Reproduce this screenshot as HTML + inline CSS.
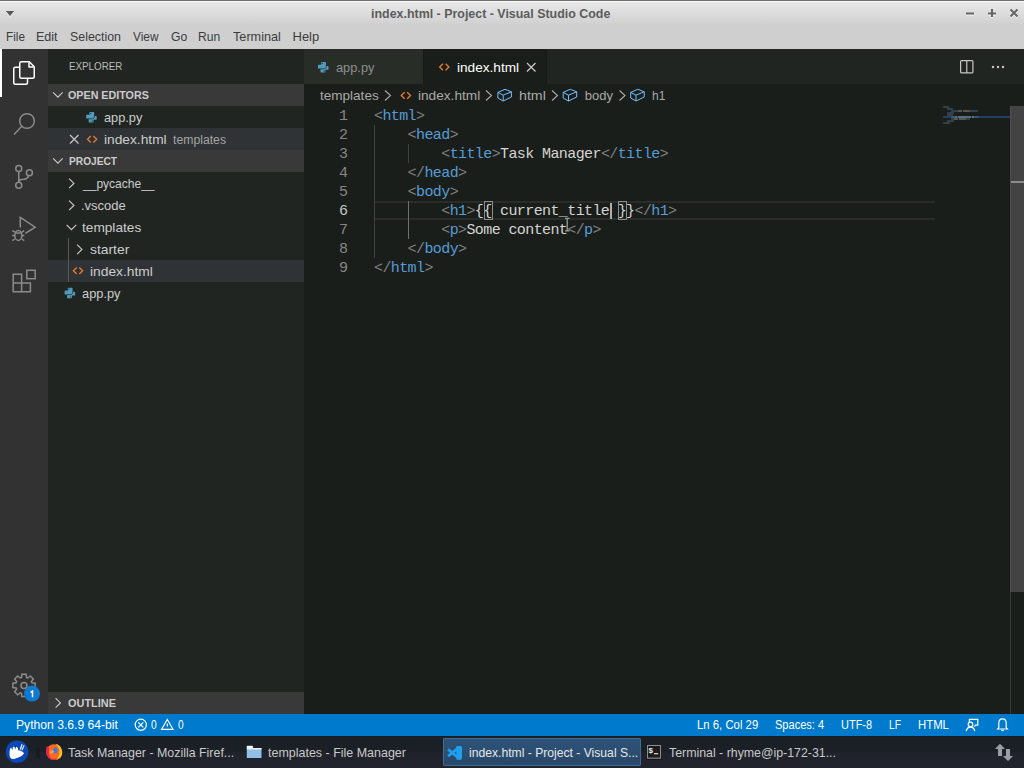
<!DOCTYPE html>
<html><head><meta charset="utf-8">
<style>
*{margin:0;padding:0;box-sizing:border-box}
html,body{width:1024px;height:768px;overflow:hidden;background:#1a1e1a;font-family:"Liberation Sans",sans-serif}
.a{position:absolute}
.t{position:absolute;white-space:pre;line-height:1;transform-origin:0 0}
#title{left:0;top:0;width:1024px;height:24px;background:linear-gradient(#e7e7e7 0px,#e3e3e3 6px,#d2d2d2 22px,#cfcfcf 24px);border-top:1px solid #6e6e6e}
#title:after{content:"";position:absolute;left:0;top:0;width:1024px;height:1px;background:#fafafa}
#menu{left:0;top:24px;width:1024px;height:25px;background:#cfcfcf}
#act{left:0;top:49px;width:48px;height:665px;background:#323232}
#side{left:48px;top:49px;width:256px;height:665px;background:#212522}
#tabs{left:304px;top:49px;width:720px;height:35px;background:#212522}
#status{left:0;top:714px;width:1024px;height:22px;background:#007acc}
#task{left:0;top:736px;width:1024px;height:32px;background:linear-gradient(#1b2026 0px,#1b2027 15px,#20232c 16px,#21232d 32px);border-top:1px solid #181b1f}
.menu{font-size:13px;color:#3c3c3c;top:30px}
.st{font-size:12px;color:#ffffff;top:719px}
.code{font-family:"Liberation Mono",monospace;font-size:15px;letter-spacing:-0.6px;line-height:19px;position:absolute;white-space:pre;left:374px}
.ln{font-family:"Liberation Mono",monospace;font-size:15px;line-height:19px;position:absolute;white-space:pre;color:#858585;text-align:right;width:40px;left:308px}
.p{color:#808080}.k{color:#569cd6}.x{color:#d4d4d4}
.side{font-size:13px;color:#cccccc}
.hdr{font-size:11px;font-weight:bold;color:#cccccc}
</style></head><body>
<!-- title bar -->
<div id="title" class="a"></div>
<!-- menu -->
<div id="menu" class="a"></div>

<!-- activity bar -->
<div id="act" class="a"></div>
<div class="a" style="left:0;top:49px;width:2px;height:48px;background:#ffffff"></div>

<!-- sidebar -->
<div id="side" class="a"></div>
<div class="a" style="left:48px;top:84px;width:256px;height:22px;background:#393939"></div>
<div class="a" style="left:48px;top:128px;width:256px;height:22px;background:#2f3335"></div>
<div class="a" style="left:48px;top:150px;width:256px;height:22px;background:#393939"></div>
<div class="a" style="left:48px;top:260px;width:256px;height:22px;background:#2f3335"></div>
<div class="a" style="left:48px;top:692px;width:256px;height:22px;background:#393939"></div>

<!-- tabs -->
<div id="tabs" class="a"></div>
<div class="a" style="left:304px;top:49px;width:119px;height:35px;background:#292d28"></div>
<div class="a" style="left:423px;top:49px;width:124px;height:35px;background:#1a1e1a;border-left:1px solid #161916;border-right:1px solid #161916"></div>

<!-- breadcrumbs -->

<!-- code -->
<div class="ln" style="top:107px">1
2
3
4
5
<span style="color:#c6c6c6">6</span>
7
8
9</div>
<div class="code" style="top:107px"><span class="p">&lt;</span><span class="k">html</span><span class="p">&gt;</span>
    <span class="p">&lt;</span><span class="k">head</span><span class="p">&gt;</span>
        <span class="p">&lt;</span><span class="k">title</span><span class="p">&gt;</span><span class="x">Task Manager</span><span class="p">&lt;/</span><span class="k">title</span><span class="p">&gt;</span>
    <span class="p">&lt;/</span><span class="k">head</span><span class="p">&gt;</span>
    <span class="p">&lt;</span><span class="k">body</span><span class="p">&gt;</span>
        <span class="p">&lt;</span><span class="k">h1</span><span class="p">&gt;</span><span class="x">{{ current_title }}</span><span class="p">&lt;/</span><span class="k">h1</span><span class="p">&gt;</span>
        <span class="p">&lt;</span><span class="k">p</span><span class="p">&gt;</span><span class="x">Some content</span><span class="p">&lt;/</span><span class="k">p</span><span class="p">&gt;</span>
    <span class="p">&lt;/</span><span class="k">body</span><span class="p">&gt;</span>
<span class="p">&lt;/</span><span class="k">html</span><span class="p">&gt;</span></div>


<!-- editor decorations -->
<div class="a" style="left:374px;top:201px;width:561px;height:19px;border-top:2px solid #2a2c2a;border-bottom:2px solid #2a2c2a"></div>
<div class="a" style="left:374px;top:125px;width:1px;height:133px;background:#404040"></div>
<div class="a" style="left:408px;top:144px;width:1px;height:19px;background:#404040"></div>
<div class="a" style="left:408px;top:201px;width:1px;height:38px;background:#707070"></div>
<div class="a" style="left:484px;top:201px;width:9px;height:19px;border:1px solid #8c8c8c"></div>
<div class="a" style="left:618px;top:201px;width:9px;height:19px;border:1px solid #8c8c8c"></div>
<div class="a" style="left:610px;top:203px;width:2px;height:16px;background:#aeafad"></div>
<svg class="a" style="left:560px;top:214px" width="14" height="20"><path d="M5 4.3 H9.6 M7.2 4.3 V16.8 M5 16.8 H9.6" stroke="#9a9a9a" stroke-width="1.3" fill="none"/></svg>
<!-- scrollbar -->
<div class="a" style="left:1010px;top:106px;width:1px;height:608px;background:#3a3a3a"></div>
<div class="a" style="left:1010px;top:106px;width:14px;height:486px;background:#434343;border-left:1px solid #4e4e4e"></div>
<div class="a" style="left:1011px;top:181px;width:13px;height:2px;background:#8a8a8a"></div>
<!-- minimap -->
<div class="a" style="left:943px;top:116px;width:67px;height:2px;background:#22405f"></div>

<!-- status bar -->
<div id="status" class="a"></div>

<!-- taskbar -->
<div id="task" class="a"></div>
<div class="a" style="left:443px;top:738px;width:198px;height:28px;background:linear-gradient(#2e5379,#284868);border:1px solid #3f6b95;border-radius:1px"></div>

<div class="t" style="left:370.50px;top:6.60px;font-size:13px;font-weight:bold;color:#5c5c5c;transform:scaleX(0.9557)">index.html - Project - Visual Studio Code</div>
<div class="t" style="left:5.50px;top:30.00px;font-size:13px;font-weight:normal;color:#3c3c3c;transform:scaleX(0.9028)">File</div>
<div class="t" style="left:36.04px;top:30.00px;font-size:13px;font-weight:normal;color:#3c3c3c;transform:scaleX(0.9638)">Edit</div>
<div class="t" style="left:70.30px;top:30.00px;font-size:13px;font-weight:normal;color:#3c3c3c;transform:scaleX(0.9521)">Selection</div>
<div class="t" style="left:133.00px;top:30.00px;font-size:13px;font-weight:normal;color:#3c3c3c;transform:scaleX(0.9105)">View</div>
<div class="t" style="left:171.00px;top:30.00px;font-size:13px;font-weight:normal;color:#3c3c3c;transform:scaleX(0.9350)">Go</div>
<div class="t" style="left:198.07px;top:30.00px;font-size:13px;font-weight:normal;color:#3c3c3c;transform:scaleX(0.9285)">Run</div>
<div class="t" style="left:233.00px;top:30.00px;font-size:13px;font-weight:normal;color:#3c3c3c;transform:scaleX(0.9749)">Terminal</div>
<div class="t" style="left:292.50px;top:30.00px;font-size:13px;font-weight:normal;color:#3c3c3c">Help</div>
<div class="t" style="left:68.60px;top:60.50px;font-size:11px;font-weight:normal;color:#bbbbbb;transform:scaleX(0.8905)">EXPLORER</div>
<div class="t" style="left:68.30px;top:89.50px;font-size:11px;font-weight:bold;color:#cccccc;transform:scaleX(0.9747)">OPEN EDITORS</div>
<div class="t" style="left:104.25px;top:111.00px;font-size:13px;font-weight:normal;color:#cccccc;transform:scaleX(0.9802)">app.py</div>
<div class="t" style="left:104.00px;top:132.70px;font-size:13px;font-weight:normal;color:#cccccc;transform:scaleX(1.0571)">index.html</div>
<div class="t" style="left:173.20px;top:133.70px;font-size:12px;font-weight:normal;color:#a3a3a3;transform:scaleX(1.0187)">templates</div>
<div class="t" style="left:68.50px;top:155.50px;font-size:11px;font-weight:bold;color:#cccccc;transform:scaleX(0.9247)">PROJECT</div>
<div class="t" style="left:83.13px;top:177.00px;font-size:13px;font-weight:normal;color:#cccccc;transform:scaleX(0.9253)">__pycache__</div>
<div class="t" style="left:81.00px;top:199.00px;font-size:13px;font-weight:normal;color:#cccccc">.vscode</div>
<div class="t" style="left:82.00px;top:221.00px;font-size:13px;font-weight:normal;color:#cccccc;transform:scaleX(1.0508)">templates</div>
<div class="t" style="left:90.00px;top:243.00px;font-size:13px;font-weight:normal;color:#cccccc;transform:scaleX(1.0663)">starter</div>
<div class="t" style="left:90.00px;top:265.00px;font-size:13px;font-weight:normal;color:#cccccc;transform:scaleX(1.0613)">index.html</div>
<div class="t" style="left:82.00px;top:287.00px;font-size:13px;font-weight:normal;color:#cccccc;transform:scaleX(0.9865)">app.py</div>
<div class="t" style="left:68.00px;top:697.50px;font-size:11px;font-weight:bold;color:#cccccc;transform:scaleX(0.9929)">OUTLINE</div>
<div class="t" style="left:336.20px;top:60.80px;font-size:13px;font-weight:normal;color:#8d8d8d;transform:scaleX(0.9840)">app.py</div>
<div class="t" style="left:456.60px;top:61.00px;font-size:13px;font-weight:normal;color:#ffffff;transform:scaleX(1.0470)">index.html</div>
<div class="t" style="left:320.20px;top:89.00px;font-size:13px;font-weight:normal;color:#a9a9a9;transform:scaleX(1.0411)">templates</div>
<div class="t" style="left:418.30px;top:89.00px;font-size:13px;font-weight:normal;color:#a9a9a9;transform:scaleX(1.0495)">index.html</div>
<div class="t" style="left:519.30px;top:89.00px;font-size:13px;font-weight:normal;color:#a9a9a9;transform:scaleX(1.0924)">html</div>
<div class="t" style="left:584.70px;top:89.00px;font-size:13px;font-weight:normal;color:#a9a9a9">body</div>
<div class="t" style="left:651.70px;top:89.00px;font-size:13px;font-weight:normal;color:#a9a9a9;transform:scaleX(0.9206)">h1</div>
<div class="t" style="left:15.60px;top:719.20px;font-size:12px;font-weight:normal;color:#ffffff;transform:scaleX(1.0118)">Python 3.6.9 64-bit</div>
<div class="t" style="left:151.00px;top:719.20px;font-size:12px;font-weight:normal;color:#ffffff;transform:scaleX(0.8571)">0</div>
<div class="t" style="left:177.70px;top:719.20px;font-size:12px;font-weight:normal;color:#ffffff;transform:scaleX(0.8429)">0</div>
<div class="t" style="left:696.80px;top:719.20px;font-size:12px;font-weight:normal;color:#ffffff;transform:scaleX(0.9456)">Ln 6, Col 29</div>
<div class="t" style="left:775.00px;top:719.20px;font-size:12px;font-weight:normal;color:#ffffff;transform:scaleX(0.9200)">Spaces: 4</div>
<div class="t" style="left:840.60px;top:719.20px;font-size:12px;font-weight:normal;color:#ffffff;transform:scaleX(0.9149)">UTF-8</div>
<div class="t" style="left:889.00px;top:719.20px;font-size:12px;font-weight:normal;color:#ffffff;transform:scaleX(0.8556)">LF</div>
<div class="t" style="left:917.50px;top:719.20px;font-size:12px;font-weight:normal;color:#ffffff;transform:scaleX(0.9457)">HTML</div>
<div class="t" style="left:68.30px;top:745.80px;font-size:13px;font-weight:normal;color:#c8c8c8;transform:scaleX(0.9545)">Task Manager - Mozilla Firef...</div>
<div class="t" style="left:267.90px;top:745.80px;font-size:13px;font-weight:normal;color:#c8c8c8;transform:scaleX(0.9595)">templates - File Manager</div>
<div class="t" style="left:469.40px;top:745.80px;font-size:13px;font-weight:normal;color:#e6e6e6;transform:scaleX(0.9341)">index.html - Project - Visual S...</div>
<div class="t" style="left:668.90px;top:745.80px;font-size:13px;font-weight:normal;color:#c8c8c8;transform:scaleX(0.9501)">Terminal - rhyme@ip-172-31...</div>
<svg class="a" style="left:0;top:0;pointer-events:none" width="1024" height="768" viewBox="0 0 1024 768">
<defs>
 <g id="py"><path d="M3.6 0 H7.4 Q8 0 8 0.6 V5.4 L6.8 6.6 H0.6 Q0 6.6 0 6 V3.4 Q0 2.8 0.6 2.8 H3.2 V0.4 Q3.2 0 3.6 0 Z" fill="#519aba"/><path d="M6.9 10.5 H3.1 Q2.5 10.5 2.5 9.9 V5.1 L3.7 3.9 H9.9 Q10.5 3.9 10.5 4.5 V7.1 Q10.5 7.7 9.9 7.7 H7.3 V10.1 Q7.3 10.5 6.9 10.5 Z" fill="#519aba"/><path d="M8.2 3.6 L8.2 5.3 L6.9 6.8 L2.4 6.8" stroke="#1b2a30" stroke-width="0.9" fill="none" opacity="0.8"/><circle cx="4.4" cy="1.3" r="0.6" fill="#20303a"/><circle cx="6.1" cy="9.2" r="0.6" fill="#20303a"/></g>
 <g id="ht" fill="none" stroke="#e37933" stroke-width="1.35"><path d="M4.3 0.8 L1 4 L4.3 7.2"/><path d="M6.9 0.8 L10.2 4 L6.9 7.2"/></g>
 <g id="cube" fill="none" stroke="#75beff" stroke-width="1" stroke-linejoin="round"><path d="M7.8 0.3 L0.7 3.4 V9 L6 12 L14.2 8 V2.8 Z M0.7 3.4 L6 6.2 L14.2 2.8 M6 6.2 V12"/></g>
 <g id="chr" fill="none" stroke="#c5c5c5" stroke-width="1.2"><path d="M0.6 0.6 L5.4 5.4 L0.6 10.2"/></g>
 <g id="chd" fill="none" stroke="#c5c5c5" stroke-width="1.2"><path d="M0.6 0.6 L5.4 5.4 L10.2 0.6"/></g>
</defs>
<!-- minimap -->
<g opacity="0.38"><rect x="943" y="106" width="1" height="2" fill="#6a6a6a"/><rect x="944" y="106" width="4" height="2" fill="#4a7fb0"/><rect x="948" y="106" width="1" height="2" fill="#6a6a6a"/><rect x="947" y="108" width="1" height="2" fill="#6a6a6a"/><rect x="948" y="108" width="4" height="2" fill="#4a7fb0"/><rect x="952" y="108" width="1" height="2" fill="#6a6a6a"/><rect x="951" y="110" width="1" height="2" fill="#6a6a6a"/><rect x="952" y="110" width="5" height="2" fill="#4a7fb0"/><rect x="957" y="110" width="1" height="2" fill="#6a6a6a"/><rect x="958" y="110" width="4" height="2" fill="#b8b8b8"/><rect x="963" y="110" width="7" height="2" fill="#b8b8b8"/><rect x="970" y="110" width="2" height="2" fill="#6a6a6a"/><rect x="972" y="110" width="5" height="2" fill="#4a7fb0"/><rect x="977" y="110" width="1" height="2" fill="#6a6a6a"/><rect x="947" y="112" width="2" height="2" fill="#6a6a6a"/><rect x="949" y="112" width="4" height="2" fill="#4a7fb0"/><rect x="953" y="112" width="1" height="2" fill="#6a6a6a"/><rect x="947" y="114" width="1" height="2" fill="#6a6a6a"/><rect x="948" y="114" width="4" height="2" fill="#4a7fb0"/><rect x="952" y="114" width="1" height="2" fill="#6a6a6a"/><rect x="951" y="116" width="1" height="2" fill="#6a6a6a"/><rect x="952" y="116" width="2" height="2" fill="#4a7fb0"/><rect x="954" y="116" width="1" height="2" fill="#6a6a6a"/><rect x="955" y="116" width="2" height="2" fill="#b8b8b8"/><rect x="958" y="116" width="13" height="2" fill="#b8b8b8"/><rect x="972" y="116" width="2" height="2" fill="#b8b8b8"/><rect x="974" y="116" width="2" height="2" fill="#6a6a6a"/><rect x="976" y="116" width="2" height="2" fill="#4a7fb0"/><rect x="978" y="116" width="1" height="2" fill="#6a6a6a"/><rect x="951" y="118" width="1" height="2" fill="#6a6a6a"/><rect x="952" y="118" width="1" height="2" fill="#4a7fb0"/><rect x="953" y="118" width="1" height="2" fill="#6a6a6a"/><rect x="954" y="118" width="4" height="2" fill="#b8b8b8"/><rect x="959" y="118" width="7" height="2" fill="#b8b8b8"/><rect x="966" y="118" width="2" height="2" fill="#6a6a6a"/><rect x="968" y="118" width="1" height="2" fill="#4a7fb0"/><rect x="969" y="118" width="1" height="2" fill="#6a6a6a"/><rect x="947" y="120" width="2" height="2" fill="#6a6a6a"/><rect x="949" y="120" width="4" height="2" fill="#4a7fb0"/><rect x="953" y="120" width="1" height="2" fill="#6a6a6a"/><rect x="943" y="122" width="2" height="2" fill="#6a6a6a"/><rect x="945" y="122" width="4" height="2" fill="#4a7fb0"/><rect x="949" y="122" width="1" height="2" fill="#6a6a6a"/></g>
<!-- title dropdown -->
<path d="M6 11 H14 L10 16 Z" fill="#5a5a5a"/>
<!-- window controls -->
<g transform="translate(0 1)" opacity="0.7"><path d="M6 11 H14 L10 16 Z" fill="#fff"/><rect x="966" y="12.5" width="8" height="2" fill="#fff"/><rect x="988" y="12.5" width="8" height="2" fill="#fff"/><rect x="991" y="9" width="2" height="8" fill="#fff"/><path d="M1010.5 9.5 L1017.5 16.5 M1017.5 9.5 L1010.5 16.5" stroke="#fff" stroke-width="2"/></g>
<path d="M6 11 H14 L10 16 Z" fill="#5a5a5a"/><rect x="966" y="12.5" width="8" height="2" fill="#666"/>
<rect x="988" y="12.5" width="8" height="2" fill="#666"/><rect x="991" y="9" width="2" height="8" fill="#666"/>
<path d="M1010.5 9.5 L1017.5 16.5 M1017.5 9.5 L1010.5 16.5" stroke="#666" stroke-width="2"/>
<!-- activity icons -->
<g fill="none" stroke="#ffffff" stroke-width="1.5" stroke-linejoin="round">
 <path d="M21.3 61.75 H29.3 L34.25 66.7 V76.7 Q34.25 78.25 32.7 78.25 H21.3 Q19.75 78.25 19.75 76.7 V63.3 Q19.75 61.75 21.3 61.75 Z"/><path d="M29 62.2 V66.9 H33.8"/>
 <path d="M19.75 67.25 H15.3 Q13.75 67.25 13.75 68.8 V82.7 Q13.75 84.25 15.3 84.25 H26 Q27.5 84.25 27.5 82.7 V78.25"/>
</g>
<g fill="none" stroke="#8b8b8b" stroke-width="1.5">
 <circle cx="27" cy="121" r="7.3"/><path d="M21.8 126.2 L14 134.5"/>
 <circle cx="18.75" cy="168.4" r="3"/><circle cx="29.4" cy="172.8" r="3"/><circle cx="18.75" cy="185.3" r="3"/>
 <path d="M18.75 171.4 V182.3"/><path d="M28.6 175.8 C27.5 179 25 179.6 22 179.6 C20 179.6 18.75 180.5 18.75 182"/>
 <path d="M20.3 227.5 V217.3 L35.2 227.2 L25.3 233.4"/>
 <ellipse cx="18.3" cy="235.4" rx="3.5" ry="5"/><path d="M15.2 233 H21.4"/>
 <path d="M12.4 230.6 L14.8 232.2 M12.2 235.6 H14.8 M12.4 240.6 L14.8 239 M24.2 230.6 L21.8 232.2 M24.4 235.6 H21.8 M24.2 240.6 L21.8 239"/>
 <path d="M13.2 274.3 H21.6 V291.7 H13.2 Z"/><path d="M13.2 283 H30.4 V291.7 H21.6"/>
 <rect x="26.8" y="270.3" width="8.4" height="8.4"/>
</g>
<!-- gear -->
<g transform="translate(24 685.4)" fill="none" stroke="#8b8b8b" stroke-width="1.5">
 <path d="M7.90 -2.55 L11.09 -2.16 L11.09 2.16 L7.90 2.55 L7.39 3.78 L9.37 6.32 L6.32 9.37 L3.78 7.39 L2.55 7.90 L2.16 11.09 L-2.16 11.09 L-2.55 7.90 L-3.78 7.39 L-6.32 9.37 L-9.37 6.32 L-7.39 3.78 L-7.90 2.55 L-11.09 2.16 L-11.09 -2.16 L-7.90 -2.55 L-7.39 -3.78 L-9.37 -6.32 L-6.32 -9.37 L-3.78 -7.39 L-2.55 -7.90 L-2.16 -11.09 L2.16 -11.09 L2.55 -7.90 L3.78 -7.39 L6.32 -9.37 L9.37 -6.32 L7.39 -3.78 Z"/>
 <circle r="3"/>
</g>
<circle cx="32" cy="693.6" r="8" fill="#0e7ad1"/>
<path d="M30.6 692.4 L32.5 691.1 V697.3" stroke="#fff" stroke-width="1.5" fill="none"/>
<!-- sidebar icons -->
<use href="#chd" x="52.5" y="91.7"/>
<use href="#chd" x="52.5" y="157.7"/>
<use href="#chr" x="55" y="697.5"/>
<use href="#py" x="86.2" y="112"/>
<path d="M70 135 L78.5 143.5 M78.5 135 L70 143.5" stroke="#c5c5c5" stroke-width="1.3"/>
<use href="#ht" x="86.5" y="135.2"/>
<use href="#chr" x="68.5" y="178"/>
<use href="#chr" x="68.5" y="200"/>
<use href="#chd" x="66" y="224.3"/>
<use href="#chr" x="76.5" y="244"/>
<rect x="68" y="238" width="1" height="44" fill="#585858"/>
<use href="#ht" x="72.4" y="266.8"/>
<use href="#py" x="64.6" y="287.8"/>
<!-- tabs -->
<use href="#py" x="318" y="62"/>
<use href="#ht" x="438.7" y="63"/>
<path d="M527 63 L535.5 71.5 M535.5 63 L527 71.5" stroke="#c5c5c5" stroke-width="1.3"/>
<rect x="960.6" y="60.6" width="12.3" height="12.3" rx="1" fill="none" stroke="#c5c5c5" stroke-width="1.2"/><path d="M966.75 61 V73" stroke="#c5c5c5" stroke-width="1.2"/>
<circle cx="993" cy="67" r="1.2" fill="#c5c5c5"/><circle cx="998" cy="67" r="1.2" fill="#c5c5c5"/><circle cx="1003" cy="67" r="1.2" fill="#c5c5c5"/>
<!-- breadcrumbs -->
<g fill="none" stroke="#a9a9a9" stroke-width="1.1">
 <path d="M385 90.5 L390.5 95.5 L385 100.5"/><path d="M486 90.5 L491.5 95.5 L486 100.5"/>
 <path d="M552 90.5 L557.5 95.5 L552 100.5"/><path d="M619.5 90.5 L625 95.5 L619.5 100.5"/>
</g>
<use href="#ht" x="400.3" y="91.5"/>
<use href="#cube" x="497.2" y="89"/>
<use href="#cube" x="562.5" y="89"/>
<use href="#cube" x="630" y="89"/>
<!-- status icons -->
<g fill="none" stroke="#fff" stroke-width="1.2">
 <circle cx="140.8" cy="724.8" r="5.6"/><path d="M138.3 722.3 L143.3 727.3 M143.3 722.3 L138.3 727.3"/>
 <path d="M167.3 719.5 L173 729.3 H161.6 Z"/><path d="M167.3 723.5 V726.5"/>
 <path d="M969.4 722 V719.4 H977.8 V725.2 H975.6 L974.2 726.6"/><circle cx="970.5" cy="724.4" r="2.3"/><path d="M966.2 731.2 C966.7 728.6 968.3 727.2 970.5 727.2 C972.7 727.2 974.3 728.6 974.8 731.2"/>
 <path d="M998.8 727.6 V723.2 C998.8 720.6 1000.4 718.9 1002.5 718.9 C1004.6 718.9 1006.2 720.6 1006.2 723.2 V727.6 L1007.4 729 H997.6 Z"/><path d="M1001.3 730.4 H1003.7" stroke-width="1.4"/>
</g>
<!-- taskbar icons -->
<rect x="36" y="748" width="4" height="10" fill="#171a1f" opacity="0.8"/>
<circle cx="17.1" cy="751.7" r="11.3" fill="#0b47b5"/>
<path d="M9.5 754 C9.5 750.5 10 748.5 11 747.5 L12.5 750 L13 746.5 L14.8 747.3 L15 749.8 L16.3 746.8 L18 748 L18 750.2 C20.5 750.5 23 751.5 24 753.2 C23 755.5 19.5 757.5 14 759 C11 759.5 9.5 757.5 9.5 754 Z M19.6 749.6 L21.6 744 L22.6 744.4 L21 749.4 Z M21.4 750 L23.8 745 L24.6 745.5 L22.4 750.4 Z" fill="#ffffff"/>
<circle cx="54" cy="752" r="7.8" fill="#ff6a1f"/><path d="M46.3 747.5 C45.8 753 47.5 758.2 52.5 760 C49 757 48.3 753 49.3 748.8 L48 746 Z" fill="#e8235a"/><path d="M55.5 743.8 C60 744.8 62.6 749 62.2 753.5 C61.8 757.2 59 759.6 55.5 760 C59 757.2 60 754 59.6 751 C59.2 748 57.6 745.8 55.5 743.8 Z" fill="#ffc81e"/><ellipse cx="55.4" cy="750.6" rx="2.1" ry="3" fill="#2b7ff2"/><path d="M50 751.5 C51 750 53 750 54.2 751.5 C53.2 753.2 51.5 753.8 50 753.2 Z" fill="#ffa040"/><path d="M48.5 758 C51 760.3 56 760.5 59 758.5 C56 759 51.5 759 48.5 758 Z" fill="#e8235a"/>
<path d="M246.8 747 H252.5 L253.5 748 H261.5 V758 H246.8 Z" fill="#8fc0e6"/><rect x="246.8" y="745.8" width="6" height="2" fill="#fff"/><rect x="246.8" y="748" width="14.7" height="1.5" fill="#f0f0f0"/>
<g fill="#1fa0ef"><path d="M456.3 746.3 L460.2 745.8 L462 747 V758.8 L460.2 760 L456.3 759.5 Z"/></g><path d="M449.2 750.3 L457 756.6 M449.2 755.3 L457 749" stroke="#1fa0ef" stroke-width="2.8" stroke-linecap="square"/>
<rect x="646.2" y="744.2" width="15.6" height="15.2" fill="#000"/><rect x="647.4" y="745.4" width="13.2" height="12.8" fill="#1c1c1c" stroke="#8c8c8c" stroke-width="1.2"/><text x="648.6" y="753.2" font-family="Liberation Sans" font-weight="bold" font-size="8" fill="#eee">$</text><rect x="654" y="753.2" width="4.2" height="1.1" fill="#eee"/>
<path d="M1000 743.7 L1005 749 H1002 V756 H998 V749 H995 Z" fill="#9a9ea3"/><path d="M1008 761 L1013 756 H1010 V749 H1006 V756 H1003 Z" fill="#9a9ea3"/>
</svg>
</body></html>
